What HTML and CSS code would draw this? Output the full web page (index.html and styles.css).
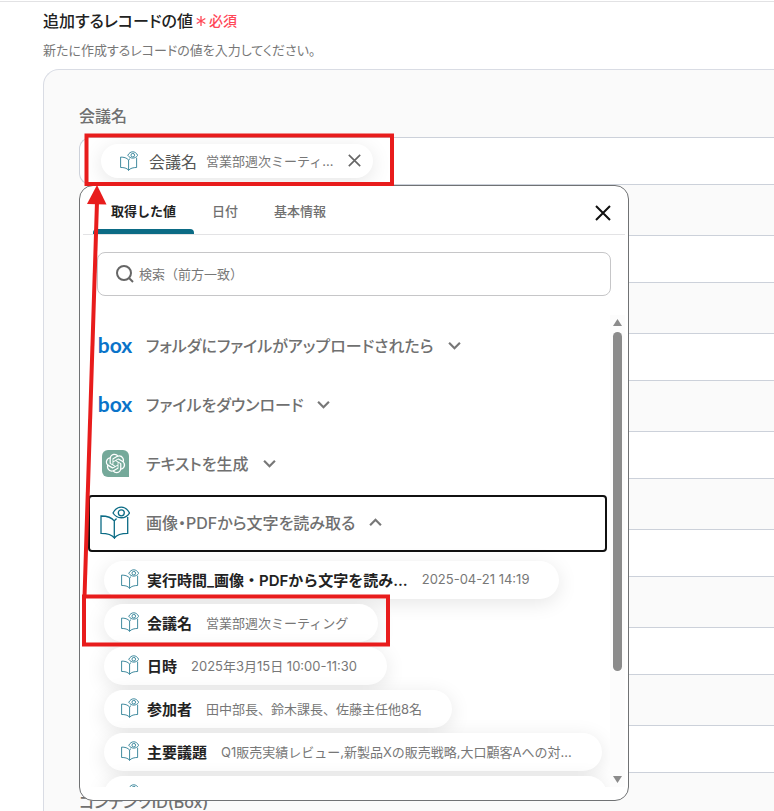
FILE: index.html
```html
<!DOCTYPE html>
<html lang="ja">
<head>
  <meta charset="UTF-8">
  <meta name="viewport" content="width=device-width, initial-scale=1">
  <title>レコードの値</title>
  <link rel="stylesheet" href="styles.css">
</head>
<body>
  <!-- アイコン定義 -->
  <svg class="sprite" aria-hidden="true">
    <symbol id="icon-book" viewBox="0 0 30 33">
      <path d="M14.3 15C11.5 11 6 10 1 10V27.3C6 27.3 11.5 28 14.3 32V15C14.8 14 15.6 13.2 16.6 12.6M27.7 11V27.3C22.5 27.3 17 28.5 14.3 32" />
      <path d="M13 7C17-.8 25.500-.8 29.500 7C25.500 13.300 17 13.300 13 7z" />
      <circle cx="21.300" cy="6.800" r="3" />
    </symbol>
    <symbol id="icon-close" viewBox="0 0 16 16">
      <path d="M1 1L15 15M15 1L1 15" />
    </symbol>
    <symbol id="icon-down" viewBox="0 0 12 8">
      <path d="M1 1.500L6 6.500L11 1.500" />
    </symbol>
    <symbol id="icon-up" viewBox="0 0 12 8">
      <path d="M1 6.500L6 1.500L11 6.500" />
    </symbol>
  </svg>

  <main class="page">
    <h1 class="title">追加するレコードの値
      <span class="required">
        <svg class="asterisk" viewBox="0 0 10 10" aria-hidden="true"><path d="M5 0V10M.7 2.500L9.300 7.500M.7 7.500L9.300 2.500" /></svg>
        必須
      </span>
    </h1>
    <p class="description">新たに作成するレコードの値を入力してください。</p>

    <div class="panel">
      <div class="field">
        <span class="label">会議名</span>
        <div class="control">
          <div class="token">
            <svg class="icon-small"><use href="#icon-book" /></svg>
            <span class="token-name">会議名</span>
            <span class="value">営業部週次ミーティ…</span>
            <button class="token-remove" aria-label="削除"><svg><use href="#icon-close" /></svg></button>
          </div>
        </div>

        <!-- 値の選択メニュー -->
        <div class="popover">
          <div class="popover-header">
            <button class="tab active">取得した値</button>
            <button class="tab">日付</button>
            <button class="tab">基本情報</button>
            <button class="close" aria-label="閉じる"><svg><use href="#icon-close" /></svg></button>
          </div>
          <label class="search">
            <svg viewBox="0 0 18 18" aria-hidden="true"><circle cx="8" cy="8" r="7" /><path d="M13 13L17 17" /></svg>
            <input type="text" placeholder="検索（前方一致）" aria-label="検索">
          </label>

          <div class="scroll">
            <div class="list">
              <button class="step">
                <span class="step-icon"><span class="box-logo">box</span></span>
                フォルダにファイルがアップロードされたら
                <svg class="chevron"><use href="#icon-down" /></svg>
              </button>
              <button class="step">
                <span class="step-icon"><span class="box-logo">box</span></span>
                ファイルをダウンロード
                <svg class="chevron"><use href="#icon-down" /></svg>
              </button>
              <button class="step">
                <span class="step-icon">
                  <svg class="gpt-logo" viewBox="0 0 36 36">
                    <path class="gpt-tile" d="M8 0H28A8 8 0 0 1 36 8V36H8A8 8 0 0 1 0 28V8A8 8 0 0 1 8 0z" />
                    <path class="gpt-knot" transform="translate(5 5) scale(1.08)" d="M22.2819 9.8211a5.9847 5.9847 0 0 0-.5157-4.9108 6.0462 6.0462 0 0 0-6.5098-2.9A6.0651 6.0651 0 0 0 4.9807 4.1818a5.9847 5.9847 0 0 0-3.9977 2.9 6.0462 6.0462 0 0 0 .7427 7.0966 5.98 5.98 0 0 0 .511 4.9107 6.051 6.051 0 0 0 6.5146 2.9001A5.9847 5.9847 0 0 0 13.2599 24a6.0557 6.0557 0 0 0 5.7718-4.2058 5.9894 5.9894 0 0 0 3.9977-2.9001 6.0557 6.0557 0 0 0-.7475-7.0729zm-9.022 12.6081a4.4755 4.4755 0 0 1-2.8764-1.0408l.1419-.0804 4.7783-2.7582a.7948.7948 0 0 0 .3927-.6813v-6.7369l2.02 1.1686a.071.071 0 0 1 .038.052v5.5826a4.504 4.504 0 0 1-4.4945 4.4944zm-9.6607-4.1254a4.4708 4.4708 0 0 1-.5346-3.0137l.142.0852 4.783 2.7582a.7712.7712 0 0 0 .7806 0l5.8428-3.3685v2.3324a.0804.0804 0 0 1-.0332.0615L9.74 19.9502a4.4992 4.4992 0 0 1-6.1408-1.6464zM2.3408 7.8956a4.485 4.485 0 0 1 2.3655-1.9728V11.6a.7664.7664 0 0 0 .3879.6765l5.8144 3.3543-2.0201 1.1685a.0757.0757 0 0 1-.071 0l-4.8303-2.7865A4.504 4.504 0 0 1 2.3408 7.872zm16.5963 3.8558L13.1038 8.364 15.1192 7.2a.0757.0757 0 0 1 .071 0l4.8303 2.7913a4.4944 4.4944 0 0 1-.6765 8.1042v-5.6772a.79.79 0 0 0-.407-.667zm2.0107-3.0231l-.142-.0852-4.7735-2.7818a.7759.7759 0 0 0-.7854 0L9.409 9.2297V6.8974a.0662.0662 0 0 1 .0284-.0615l4.8303-2.7866a4.4992 4.4992 0 0 1 6.6802 4.66zM8.3065 12.863l-2.02-1.1638a.0804.0804 0 0 1-.038-.0567V6.0742a4.4992 4.4992 0 0 1 7.3757-3.4537l-.142.0805L8.704 5.459a.7948.7948 0 0 0-.3927.6813zm1.0976-2.3654l2.602-1.4998 2.6069 1.4998v2.9994l-2.5974 1.4997-2.6067-1.4997Z" />
                  </svg>
                </span>
                テキストを生成
                <svg class="chevron"><use href="#icon-down" /></svg>
              </button>
              <button class="step open">
                <span class="step-icon"><svg class="icon-large"><use href="#icon-book" /></svg></span>
                画像・PDFから文字を読み取る
                <svg class="chevron"><use href="#icon-up" /></svg>
              </button>

              <div class="chips">
                <button class="chip">
                  <svg class="icon-small"><use href="#icon-book" /></svg>
                  <span class="chip-name">実行時間_画像・PDFから文字を読み…</span>
                  <span class="value">2025-04-21 14:19</span>
                </button>
                <button class="chip">
                  <svg class="icon-small"><use href="#icon-book" /></svg>
                  <span class="chip-name">会議名</span>
                  <span class="value">営業部週次ミーティング</span>
                </button>
                <button class="chip">
                  <svg class="icon-small"><use href="#icon-book" /></svg>
                  <span class="chip-name">日時</span>
                  <span class="value">2025年3月15日 10:00-11:30</span>
                </button>
                <button class="chip">
                  <svg class="icon-small"><use href="#icon-book" /></svg>
                  <span class="chip-name">参加者</span>
                  <span class="value">田中部長、鈴木課長、佐藤主任他8名</span>
                </button>
                <button class="chip">
                  <svg class="icon-small"><use href="#icon-book" /></svg>
                  <span class="chip-name">主要議題</span>
                  <span class="value">Q1販売実績レビュー,新製品Xの販売戦略,大口顧客Aへの対…</span>
                </button>
                <button class="chip chip-wide" aria-label="決定事項">
                  <svg class="icon-small"><use href="#icon-book" /></svg>
                </button>
              </div>
            </div>
            <div class="scrollbar">
              <svg class="arrow" viewBox="0 0 9 7"><path d="M4.500 0L9 7H0z" /></svg>
              <div class="track"><div class="thumb"></div></div>
              <svg class="arrow" viewBox="0 0 9 7"><path d="M0 0H9L4.500 7z" /></svg>
            </div>
          </div>
        </div>
      </div>

      <div class="field">
        <label class="label" for="date">日時</label>
        <input class="control" id="date" type="text">
      </div>
      <div class="field">
        <label class="label" for="members">参加者</label>
        <input class="control" id="members" type="text">
      </div>
      <div class="field">
        <label class="label" for="agenda">議題</label>
        <input class="control" id="agenda" type="text">
      </div>
      <div class="field">
        <label class="label" for="decision">決定事項</label>
        <input class="control" id="decision" type="text">
      </div>
      <div class="field">
        <label class="label" for="action">アクション</label>
        <input class="control" id="action" type="text">
      </div>
      <div class="field">
        <label class="label" for="next">次回予定</label>
        <input class="control" id="next" type="text">
      </div>
      <div class="field">
        <label class="label" for="content">コンテンツID(Box)</label>
        <input class="control" id="content" type="text">
      </div>
    </div>
  </main>

  <!-- 説明用の赤枠と矢印 -->
  <svg class="annotation" width="774" height="811" aria-hidden="true">
    <rect x="86.500" y="135.500" width="305.500" height="48.500" />
    <rect x="84" y="596.500" width="304" height="48" />
    <path d="M84.500 597L97 202" />
    <polygon points="97,185 106.500,204.500 87,204" />
  </svg>
</body>
</html>
```
FILE: styles.css
```css
* {
  box-sizing: border-box;
}
body {
  margin: 0;
  height: 100vh;
  overflow: hidden;
  position: relative;
  padding-top: 1px;
  background: #fff;
  color: #222;
  font-family: Inter, "Noto Sans CJK JP", sans-serif;
}
button, input {
  font-family: inherit;
}
button {
  border: 0;
  padding: 0;
  background: none;
  cursor: pointer;
}
svg {
  display: block;
  flex: none;
  fill: none;
}
.sprite {
  position: absolute;
  width: 0;
  height: 0;
}

/* 見出し */
.page {
  border-top: 1px solid #e2e2e4;
  padding: 7px 0 0 43px;
}
.title {
  display: flex;
  align-items: center;
  gap: 3px;
  margin: 0 0 7px;
  font-size: 16px;
  line-height: 24px;
  font-weight: 500;
  font-feature-settings: "palt";
}
.required {
  display: flex;
  align-items: center;
  gap: 3px;
  color: #ff4757;
  font-size: 14px;
}
.asterisk {
  width: 10px;
  height: 10px;
  stroke: #ff4757;
  stroke-width: 1.3;
}
.description {
  margin: 0 0 9px;
  font-size: 13px;
  line-height: 20px;
  color: #777;
  font-feature-settings: "palt";
}

/* フォーム */
.panel {
  border: 1px solid #d9dce4;
  border-right: 0;
  border-radius: 16px 0 0 0;
  background: #fafafa;
  padding: 34px 0 40px 35px;
}
.field {
  position: relative;
  margin-bottom: 17px;
}
.label {
  display: block;
  margin-bottom: 9px;
  font-size: 16px;
  line-height: 24px;
  font-weight: 500;
  color: #707070;
  font-feature-settings: "palt";
}
.control {
  display: flex;
  align-items: center;
  width: 100%;
  height: 48px;
  padding: 0 21px;
  border: 1px solid #ccd1da;
  border-right: 0;
  border-radius: 12px 0 0 12px;
  background: #fff;
}
.token {
  display: flex;
  align-items: center;
  height: 34px;
  padding: 0 12px 1px 19px;
  border-radius: 17px;
  background: #fff;
  box-shadow: 0 4px 20px rgba(0, 0, 0, 0.1);
}
.token-name {
  margin: 0 9px 0 11px;
  font-size: 16px;
  color: #555;
}
.token-remove {
  margin-left: 15px;
}
.token-remove svg {
  width: 13px;
  height: 13px;
  stroke: #666;
  stroke-width: 2;
}
.icon-small {
  width: 18px;
  height: 20px;
  stroke: #0b6b85;
  stroke-width: 1.3;
}
.value {
  font-size: 13px;
  color: #777;
  white-space: nowrap;
}

/* 値の選択メニュー */
.popover {
  position: absolute;
  z-index: 1;
  top: 81px;
  left: 0;
  width: 550px;
  padding: 0 3px 13px;
  border: 1px solid #707274;
  border-radius: 14px;
  background: #fff;
}
.popover-header {
  display: flex;
  height: 49px;
  padding: 0 14px 0 10px;
  border-bottom: 1px solid #e3e3e5;
}
.tab {
  padding: 5px 18px 0;
  border-bottom: 5px solid transparent;
  font-size: 13px;
  font-weight: 500;
  color: #707070;
}
.tab.active {
  color: #222;
  font-weight: 600;
  position: relative;
}
.tab.active::after {
  content: "";
  position: absolute;
  left: 0;
  right: 0;
  bottom: -5px;
  height: 5px;
  border-radius: 4px 4px 0 0;
  background: #0b6b85;
}
.close {
  margin-left: auto;
  padding-top: 5px;
}
.close svg {
  width: 16px;
  height: 16px;
  stroke: #111;
  stroke-width: 2;
}
.search {
  display: flex;
  align-items: center;
  gap: 5px;
  height: 44px;
  margin: 17px 14px 19px;
  padding: 0 18px;
  border: 1px solid #c6c6c8;
  border-radius: 8px;
}
.search svg {
  width: 18px;
  height: 18px;
  stroke: #666;
  stroke-width: 2;
}
.search input {
  flex: 1;
  padding: 0;
  border: 0;
  outline: 0;
  background: none;
  font-size: 13px;
}
.search input::placeholder {
  color: #777;
}
.scroll {
  display: flex;
  height: 472px;
}
.list {
  flex: 1;
  min-width: 0;
  overflow: hidden;
  padding: 3px 3px 0 5px;
}
.step {
  display: flex;
  align-items: center;
  width: 100%;
  height: 57px;
  margin-bottom: 2px;
  padding: 0 0 3px 7px;
  border: 2px solid transparent;
  border-radius: 4px;
  font-size: 16px;
  font-weight: 500;
  color: #707070;
  font-feature-settings: "palt";
}
.step.open {
  margin-bottom: 0;
  border-color: #111;
}
.step-icon {
  display: flex;
  justify-content: center;
  width: 36px;
  margin-right: 13px;
}
.box-logo {
  font-family: Lato, sans-serif;
  font-size: 21px;
  font-weight: 700;
  line-height: 24px;
  color: #0a73c9;
}
.gpt-logo {
  width: 27px;
  height: 27px;
}
.gpt-tile {
  fill: #75a99a;
}
.gpt-knot {
  fill: #fff;
}
.icon-large {
  width: 30px;
  height: 33px;
  stroke: #0b6b85;
  stroke-width: 1.3;
}
.chevron {
  width: 13px;
  height: 9px;
  margin-left: 14px;
  stroke: #777;
  stroke-width: 2;
}
.chips {
  display: flex;
  flex-direction: column;
  align-items: flex-start;
  gap: 5px;
  padding: 9px 0 0 16px;
}
.chip {
  display: flex;
  align-items: center;
  height: 38px;
  padding: 0 30px 2px 17px;
  border-radius: 19px;
  background: #fff;
  box-shadow: 0 4px 20px rgba(0, 0, 0, 0.1);
}
.chip-wide {
  width: 100%;
}
.chip-name {
  margin: 0 14px 0 8px;
  font-size: 15px;
  font-weight: 600;
  color: #222;
  white-space: nowrap;
}

/* スクロールバー */
.scrollbar {
  display: flex;
  flex-direction: column;
  align-items: center;
  width: 15px;
  padding: 4px 0;
  background: #fcfcfc;
}
.arrow {
  width: 9px;
  height: 7px;
  fill: #8b8b8b;
}
.track {
  flex: 1;
  padding-top: 6px;
}
.thumb {
  width: 9px;
  height: 339px;
  border-radius: 5px;
  background: #8b8b8b;
}

/* 赤枠と矢印 */
.annotation {
  position: absolute;
  top: 0;
  left: 0;
  z-index: 2;
  pointer-events: none;
  stroke: #e81c1c;
  stroke-width: 4;
}
.annotation polygon {
  fill: #e81c1c;
  stroke: none;
}
```
